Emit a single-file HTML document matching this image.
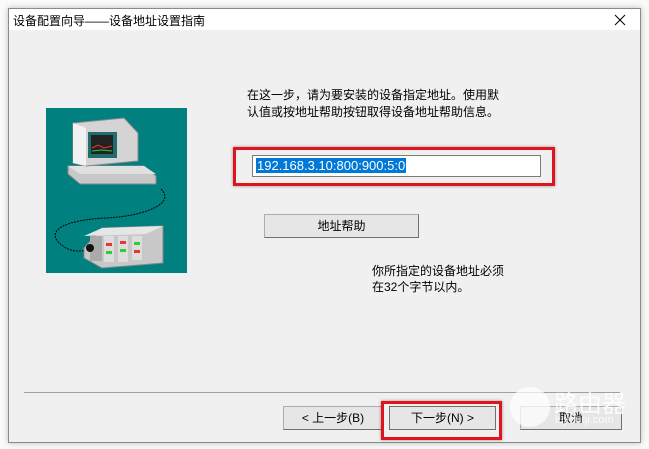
<!DOCTYPE html>
<html><head><meta charset="utf-8"><style>
body{margin:0;width:649px;height:449px;background:#fafafa;position:relative;overflow:hidden;font-family:"Liberation Sans","Noto Sans CJK SC",sans-serif;font-size:12px;color:#000}
.a{position:absolute}
.win{left:8px;top:8px;width:631px;height:433px;background:#f0f0f0;border:1px solid #8a8a8a;box-shadow:0 0 6px rgba(0,0,0,.25)}
.title{left:9px;top:9px;width:631px;height:21px;background:#fff}
.btn{background:#e6e6e6;border:1px solid #adadad;border-right-color:#707070;border-bottom-color:#707070;text-align:center;line-height:22px;font-size:12px}
.red{border:3px solid #e0141e;box-shadow:0 0 3px rgba(0,0,0,.4)}
</style></head><body>
<div class="a win"></div>
<div class="a title"></div>
<div class="a" style="left:13px;top:12px;font-size:12px">设备配置向导——设备地址设置指南</div>
<svg class="a" style="left:614px;top:14px" width="12" height="12"><path d="M1 1L11 11M11 1L1 11" stroke="#000" stroke-width="1"/></svg>
<div class="a" style="left:247px;top:87px;line-height:17px;font-size:12px">在这一步，请为要安装的设备指定地址。使用默<br>认值或按地址帮助按钮取得设备地址帮助信息。</div>
<div class="a" style="left:46px;top:108px;width:141px;height:165px;background:#00807f"></div>
<svg class="a" style="left:46px;top:108px" width="141" height="165" viewBox="0 0 141 165">
<path d="M115 81 C130 95 100 108 60 110 C15 112 -5 125 20 140 C30 145 35 142 40 143" fill="none" stroke="#000" stroke-width="1" stroke-dasharray="2 1"/>
<polygon points="22,58 98,58 110,68 110,76 34,76 22,66" fill="#c8c8c8" stroke="#888"/>
<polygon points="22,58 98,58 110,66 34,66" fill="#e0e0e0"/>
<polygon points="27,15 78,10 92,25 92,53 40,58 27,55" fill="#d4d4d4" stroke="#888"/>
<polygon points="27,15 40,20 40,58 27,55" fill="#f2f2f2"/>
<rect x="42" y="24" width="29" height="26" fill="#1f6d6d"/>
<rect x="45" y="27" width="22" height="19" fill="#222"/>
<path d="M46 40 L52 37 L58 40 L66 38" stroke="#e33" fill="none"/>
<path d="M46 43 L56 42 L66 43" stroke="#3c3" fill="none"/>
<polygon points="38,140 56,120 117,118 117,155 56,160 38,150" fill="#c8c8c8" stroke="#888"/>
<polygon points="38,128 56,120 117,118 100,126" fill="#e6e6e6"/>
<rect x="44" y="128" width="12" height="25" fill="#aaa"/>
<circle cx="44" cy="140" r="4" fill="#111"/>
<rect x="58" y="128" width="10" height="26" fill="#ddd"/><rect x="72" y="128" width="10" height="26" fill="#ddd"/><rect x="86" y="128" width="10" height="24" fill="#ddd"/>
<rect x="60" y="135" width="6" height="3" fill="#e33"/><rect x="60" y="143" width="6" height="3" fill="#3c3"/><rect x="74" y="133" width="6" height="3" fill="#e33"/><rect x="74" y="141" width="6" height="3" fill="#3c3"/><rect x="88" y="134" width="6" height="3" fill="#3c3"/><rect x="88" y="142" width="6" height="3" fill="#e33"/>
</svg>
<div class="a red" style="left:233px;top:147px;width:316px;height:33px"></div>
<div class="a" style="left:252px;top:155px;width:287px;height:20px;background:#fff;border:1px solid #7a7a7a"></div>
<div class="a" style="left:256px;top:158px;height:15px;line-height:15px;background:#0078d7;color:#fff;font-size:13px;padding:0 1px">192.168.3.10:800:900:5:0</div>
<div class="a btn" style="left:264px;top:214px;width:153px;height:22px">地址帮助</div>
<div class="a" style="left:372px;top:263px;line-height:16px;font-size:12px">你所指定的设备地址必须<br>在32个字节以内。</div>
<div class="a" style="left:24px;top:392px;width:596px;height:1px;background:#a0a0a0"></div>
<div class="a btn" style="left:283px;top:406px;width:98px;height:22px">&lt; 上一步(B)</div>
<div class="a btn" style="left:389px;top:406px;width:105px;height:22px;border:1px solid #707070">下一步(N) &gt;</div>
<div class="a red" style="left:381px;top:401px;width:115px;height:33px"></div>
<div class="a btn" style="left:520px;top:406px;width:100px;height:22px">取消</div>
<div class="a" style="left:510px;top:387px;width:40px;height:40px;border-radius:50%;background:rgba(255,255,255,.7)"></div>
<div class="a" style="left:554px;top:384px;font-size:24px;color:rgba(255,255,255,.85)">路由器</div>
<div class="a" style="left:555px;top:414px;font-size:11px;color:rgba(255,255,255,.8)">luyouqi.com</div>
</body></html>
